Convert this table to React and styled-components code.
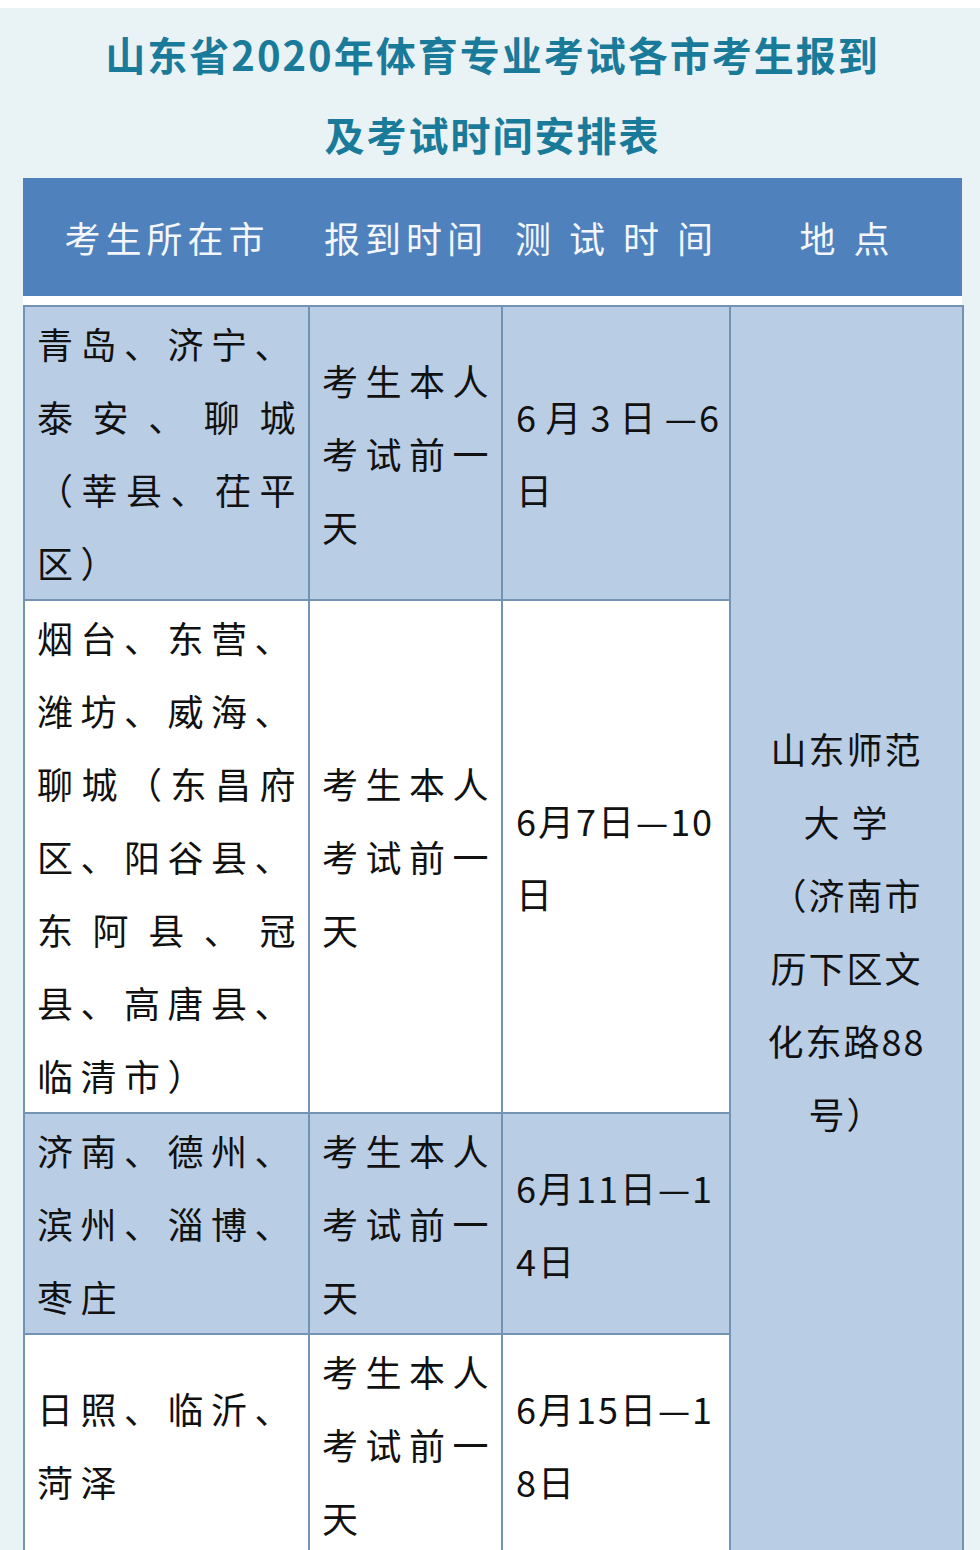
import React from "react";
import styled, { createGlobalStyle } from "styled-components";

const colors = {
  page: "#e9f2f4",
  title: "#1a7a9a",
  head: "#4f81bd",
  band: "#b9cde5",
  line: "#7393b5",
  ink: "#111111",
};

const GlobalStyle = createGlobalStyle`
  body {
    margin: 0;
    background: ${colors.page};
    font-family: "Noto Sans CJK SC", "Noto Sans", sans-serif;
  }
`;

const rows = [
  {
    band: true,
    city: [["青岛、济宁、"], ["泰安、聊城", true], ["（莘县、茌平", true], ["区）"]],
    report: [["考生本人", true], ["考试前一", true], ["天"]],
    test: [["6月3日—6", true], ["日"]],
  },
  {
    band: false,
    city: [
      ["烟台、东营、"],
      ["潍坊、威海、"],
      ["聊城（东昌府", true],
      ["区、阳谷县、"],
      ["东阿县、冠", true],
      ["县、高唐县、"],
      ["临清市）"],
    ],
    report: [["考生本人", true], ["考试前一", true], ["天"]],
    test: [["6月7日—10"], ["日"]],
  },
  {
    band: true,
    city: [["济南、德州、"], ["滨州、淄博、"], ["枣庄"]],
    report: [["考生本人", true], ["考试前一", true], ["天"]],
    test: [["6月11日—1"], ["4日"]],
  },
  {
    band: false,
    city: [["日照、临沂、"], ["菏泽"]],
    report: [["考生本人", true], ["考试前一", true], ["天"]],
    test: [["6月15日—1"], ["8日"]],
  },
];

const place = ["山东师范", "大 学", "（济南市", "历下区文", "化东路88", "号）"];

const Lines = ({ lines }) =>
  lines.map(([text, spread], i) => (
    <Line key={i} $spread={spread}>
      {text}
    </Line>
  ));

const App = () => {
  return (
    <Page>
      <GlobalStyle />
      <Title>
        山东省2020年体育专业考试各市考生报到
        <br />
        及考试时间安排表
      </Title>
      <Board>
        <HeadRow>
          <HeadCell>考生所在市</HeadCell>
          <HeadCell>报到时间</HeadCell>
          <HeadCell>测 试 时 间</HeadCell>
          <HeadCell>地 点</HeadCell>
        </HeadRow>
        <Table>
          <colgroup>
            <col style={{ width: 285 }} />
            <col style={{ width: 193 }} />
            <col style={{ width: 228 }} />
            <col style={{ width: 233 }} />
          </colgroup>
          <tbody>
            {rows.map((r, i) => (
              <tr key={i}>
                <Cell $band={r.band}>
                  <Lines lines={r.city} />
                </Cell>
                <Cell $band={r.band}>
                  <Lines lines={r.report} />
                </Cell>
                <DateCell $band={r.band}>
                  <Lines lines={r.test} />
                </DateCell>
                {i === 0 && (
                  <PlaceCell rowSpan={rows.length}>
                    {place.map((p) => (
                      <Line key={p}>{p}</Line>
                    ))}
                  </PlaceCell>
                )}
              </tr>
            ))}
          </tbody>
        </Table>
      </Board>
    </Page>
  );
};

export default App;

const Page = styled.div`
  border-top: 8px solid #ffffff;
  background: ${colors.page};
  padding: 6px 18px 0 23px;
`;

const Title = styled.h1`
  margin: 0;
  text-align: center;
  color: ${colors.title};
  font-size: 40px;
  font-weight: 700;
  line-height: 80px;
  letter-spacing: 2px;
`;

const Board = styled.div`
  margin-top: 4px;
  width: 939px;
  background: #ffffff;
`;

const HeadRow = styled.div`
  display: grid;
  grid-template-columns: 285px 193px 228px 233px;
  align-items: center;
  height: 118px;
  margin-bottom: 9px;
  background: ${colors.head};
`;

const HeadCell = styled.div`
  text-align: center;
  color: #f3f6fa;
  font-size: 36px;
  letter-spacing: 5px;
  padding: 0 0 0 3px;
  white-space: pre;
`;

const Table = styled.table`
  width: 939px;
  table-layout: fixed;
  border-collapse: collapse;
`;

const Cell = styled.td`
  border: 2px solid ${colors.line};
  padding: 0 5px 0 12px;
  vertical-align: middle;
  background: ${(p) => (p.$band ? colors.band : "#ffffff")};
  color: ${colors.ink};
  font-size: 36px;
  line-height: 73px;
  letter-spacing: 7.5px;
`;

const DateCell = styled(Cell)`
  letter-spacing: 2px;
  padding: 0 8px 0 13px;
`;

const PlaceCell = styled(Cell)`
  background: ${colors.band};
  text-align: center;
  letter-spacing: 2px;
  padding: 0 8px;
`;

const Line = styled.span`
  display: block;
  white-space: pre;
  text-align-last: ${(p) => (p.$spread ? "justify" : "auto")};
`;
